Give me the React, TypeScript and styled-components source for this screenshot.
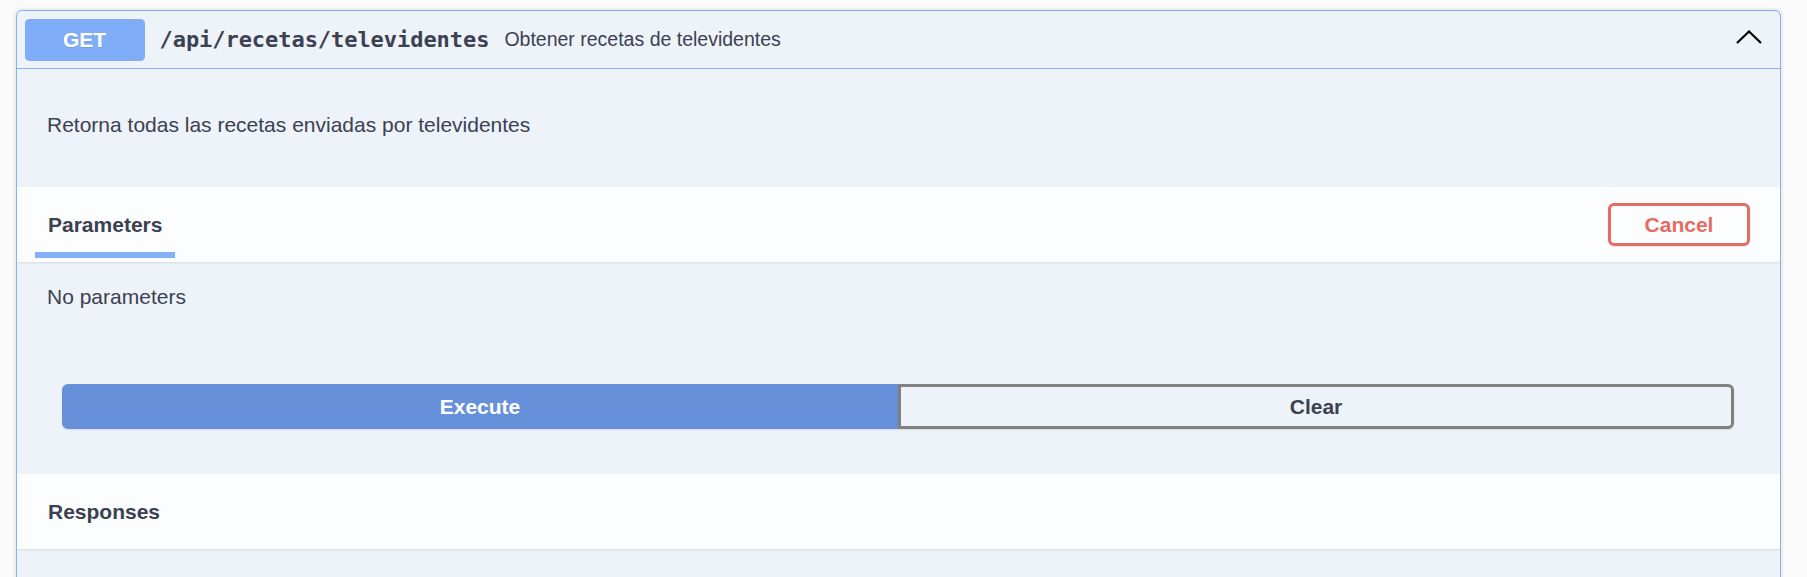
import React from "react";
import styled, { createGlobalStyle } from "styled-components";

const GlobalStyle = createGlobalStyle`
  html, body { margin: 0; padding: 0; background: #fafafa; }
  body { font-family: "Liberation Sans", Arial, sans-serif; color: #3b4151; }
  * { box-sizing: border-box; }
`;

const Page = styled.div`
  padding: 10px 26px 0 16px;
`;

const OpBlock = styled.div`
  border: 1px solid #86b2f9;
  border-radius: 6px;
  background: #eef2f9;
  box-shadow: 0 0 4px rgba(0, 0, 0, 0.15);
  overflow: hidden;
`;

const Summary = styled.div`
  display: flex;
  align-items: center;
  padding: 7.5px 18px 7.5px 7.5px;
  border-bottom: 1px solid #86b2f9;
`;

const Method = styled.span`
  display: inline-block;
  width: 120px;
  height: 42px;
  line-height: 42px;
  text-align: center;
  border-radius: 4.5px;
  background: #80adf7;
  color: #fff;
  font-weight: 700;
  font-size: 21px;
  text-shadow: 0 1px 0 rgba(0, 0, 0, 0.1);
`;

const Path = styled.span`
  font-family: "DejaVu Sans Mono", "Liberation Mono", monospace;
  font-weight: 700;
  font-size: 22px;
  letter-spacing: -0.05px;
  padding: 0 15px;
  color: #3b4151;
`;

const SummaryDesc = styled.span`
  flex: 1;
  font-size: 19.5px;
  color: #3b4151;
`;

const Chevron = styled.svg`
  width: 26px;
  height: 14px;
  margin-bottom: 6px;
  margin-left: 10px;
`;

const DescWrapper = styled.div`
  padding: 44px 30px 50px 30px;
`;

const Text = styled.p`
  margin: 0;
  font-size: 21px;
  line-height: 24px;
  color: #3b4151;
`;

const SectionHeader = styled.div`
  display: flex;
  align-items: center;
  justify-content: space-between;
  height: 75px;
  padding: 0 30px 0 18px;
  background: #fcfdff;
  box-shadow: 0 1px 2px rgba(0, 0, 0, 0.1);
  position: relative;
`;

const ResponsesHeader = styled(SectionHeader)`
  padding: 0 30px 0 31px;
`;

const Tab = styled.div<{ $active?: boolean }>`
  align-self: stretch;
  display: flex;
  align-items: center;
  padding: 0 13px;
  position: relative;
  &::after {
    content: "";
    display: ${(p) => (p.$active ? "block" : "none")};
    position: absolute;
    left: 0;
    right: 0;
    bottom: 4px;
    height: 6px;
    background: #85aff7;
  }
`;

const Title = styled.h4`
  margin: 0;
  font-size: 21px;
  font-weight: 700;
  line-height: 24px;
  color: #3b4151;
`;

const CancelButton = styled.button`
  width: 142px;
  height: 43px;
  border: 3px solid #e46c63;
  border-radius: 6px;
  background: transparent;
  color: #e46c63;
  font-family: "Liberation Sans", Arial, sans-serif;
  font-weight: 700;
  font-size: 21px;
  box-shadow: 0 1px 2px rgba(0, 0, 0, 0.1);
  cursor: pointer;
`;

const ParamsBody = styled.div`
  padding: 23px 30px 30px 30px;
`;

const BtnGroup = styled.div`
  display: flex;
  padding: 45px 46px 45px 45px;
`;

const ActionButton = styled.button<{ $primary?: boolean }>`
  flex: 1;
  height: 45px;
  font-family: "Liberation Sans", Arial, sans-serif;
  font-weight: 700;
  font-size: 21px;
  cursor: pointer;
  box-shadow: 0 1px 2px rgba(0, 0, 0, 0.1);
  ${(p) =>
    p.$primary
      ? `
    background: #6790da;
    color: #fff;
    border: 3px solid #6790da;
    border-radius: 6px 0 0 6px;
  `
      : `
    background: #eef2f9;
    color: #3b4151;
    border: 3px solid #808080;
    border-radius: 0 6px 6px 0;
  `}
`;

const Footer = styled.div`
  height: 40px;
`;

export default function App() {
  return (
    <>
      <GlobalStyle />
      <Page>
        <OpBlock>
          <Summary>
            <Method>GET</Method>
            <Path>/api/recetas/televidentes</Path>
            <SummaryDesc>Obtener recetas de televidentes</SummaryDesc>
            <Chevron viewBox="0 0 26 14" fill="none">
              <polyline points="1,13 13,1.5 25,13" stroke="#000" strokeWidth="2.2" />
            </Chevron>
          </Summary>
          <DescWrapper>
            <Text>Retorna todas las recetas enviadas por televidentes</Text>
          </DescWrapper>
          <SectionHeader>
            <Tab $active>
              <Title>Parameters</Title>
            </Tab>
            <CancelButton>Cancel</CancelButton>
          </SectionHeader>
          <ParamsBody>
            <Text>No parameters</Text>
          </ParamsBody>
          <BtnGroup>
            <ActionButton $primary>Execute</ActionButton>
            <ActionButton>Clear</ActionButton>
          </BtnGroup>
          <ResponsesHeader>
            <Title>Responses</Title>
          </ResponsesHeader>
          <Footer />
        </OpBlock>
      </Page>
    </>
  );
}
